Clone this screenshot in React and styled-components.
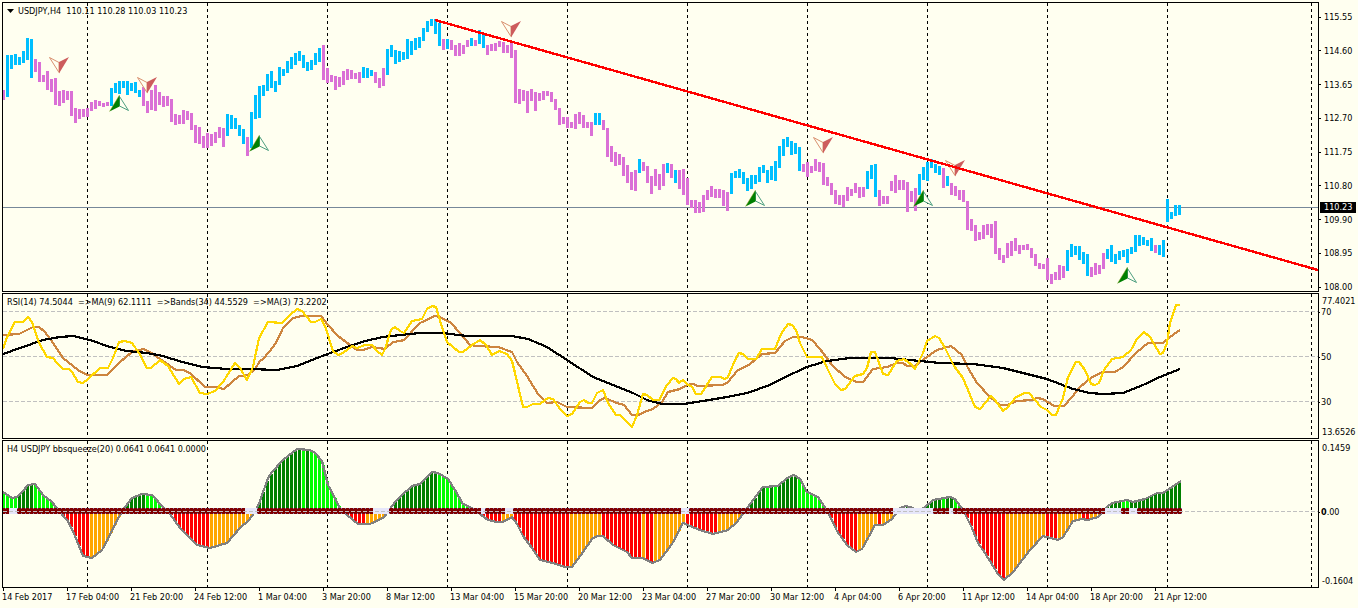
import React from "react";
import styled, { createGlobalStyle } from "styled-components";

//data
const FIRST_X = 3;
const STEP = 4;
const ZERO_Y = 511;
const SEPARATORS = [87, 207, 327, 447, 567, 687, 807, 927, 1047, 1167, 1311];

// one entry per bar: u = up, d = down, then high-low
const BARS = `
d90-100 u55-97 u55-69 u54-65 u57-65 u51-63 u38-60 u39-78 d59-72 d62-82
d75-82 d71-90 d79-92 d78-105 d91-106 d90-103 d91-100 d91-116 d108-123 d109-119
d109-117 d108-117 d102-111 d100-109 d101-106 d103-107 d102-106 u88-106 u83-93 u81-94
u81-88 u81-95 u83-91 u82-93 u90-97 d87-106 d101-113 d90-110 d85-111 d92-105
d96-107 d96-106 d99-122 d114-125 d115-124 d110-124 d111-120 d113-130 d125-143 d127-144
d136-148 d133-148 d134-146 d132-143 d127-138 d128-147 u114-136 u115-129 u118-129 u125-136
u129-144 d137-156 u112-148 u95-119 u86-118 u85-96 u74-91 u71-88 u81-92 u67-85
u69-76 u61-73 u57-69 u53-65 u51-61 u55-68 u62-71 u60-70 u53-65 u48-62
d45-80 d68-83 d75-82 d76-90 d77-87 d71-85 d69-80 d70-79 d73-79 d72-83
u67-78 u68-78 u70-76 d72-83 d78-88 d68-86 u49-75 u45-57 u50-64 u51-62
u52-60 u39-59 u41-55 u38-50 u37-48 u28-41 u21-32 u19-26 u19-34 u23-46
d39-50 u39-49 d40-50 d45-56 d43-56 d45-54 d40-47 u38-46 d40-46 u30-44
u33-48 d45-55 d44-51 d43-51 d41-47 d42-53 d45-53 d43-58 d50-103 d89-104
d90-101 d91-113 d89-101 d92-111 d93-101 d91-100 d91-96 d92-102 d99-110 d108-125
d117-124 d117-128 d122-128 d114-129 d112-124 d115-128 d122-128 d122-136 u113-125 u113-125
d120-130 d128-157 d146-162 d152-166 d154-165 d157-176 d165-183 d172-190 d170-191 u159-173
d162-171 d166-183 d176-194 d169-186 d174-190 d164-186 u163-173 d164-178 u170-183 d170-189
d169-195 d178-205 d200-208 d200-213 d202-213 d195-212 d190-200 d186-197 d189-198 d189-198
d190-206 d192-211 u173-194 u171-178 u169-178 u172-184 u178-191 u175-189 u175-184 u167-182
u165-173 u170-183 u166-180 u161-181 u146-168 u139-156 u137-147 u141-155 u143-154 u147-171
d164-172 d162-177 d166-173 d159-171 d162-172 d163-185 d177-186 d183-195 d190-204 d195-205
d195-207 d187-201 d189-196 d183-193 d187-198 d187-197 u171-189 u165-179 u164-197 d190-206
d196-204 d196-204 d181-191 d175-193 d180-190 d180-190 d182-212 d191-202 d188-211 u174-195
u167-180 u162-181 u159-168 u164-173 u166-175 d168-188 u176-186 d183-195 d186-196 d190-200
d190-202 d201-230 d219-231 d225-241 d232-240 d225-239 d224-235 d224-238 d221-254 d248-260
d255-263 d243-258 d241-256 d238-251 d245-254 d245-250 d244-250 d248-258 d254-266 d263-269
d264-269 d258-280 d274-284 d272-280 d265-280 d266-278 u250-271 u244-257 u246-255 u246-260
u252-264 u254-276 d267-277 d263-275 d265-274 d253-269 u249-259 u245-262 u254-264 u251-260
u250-257 u249-263 u247-254 u235-252 u235-246 u237-245 u240-246 u238-251 d245-253 u245-255
u240-257 u199-222 u212-219 u205-216 u205-215`
  .trim()
  .split(/\s+/)
  .map((entry) => {
    const [high, low] = entry.slice(1).split("-").map(Number);
    return { up: entry[0] === "u", high, low };
  });

const SELL_SIGNALS = [[59, 57], [147, 77], [511, 21], [823, 137], [955, 160]];
const BUY_SIGNALS = [[119, 95], [259, 135], [755, 190], [923, 190], [1127, 267]];

const RSI_FAST =
  "3,349 7,337 15,322 23,322 28,317 32,322 39,343 47,357 53,358 57,363 63,369 69,369 72,372 78,382 83,383 87,380 100,368 108,368 113,358 119,342 125,341 132,343 139,353 147,368 151,368 160,360 168,366 179,384 184,379 191,377 200,393 207,394 215,391 223,382 235,363 240,368 247,380 253,367 259,338 268,322 282,323 290,315 297,309 302,311 311,322 315,322 321,319 325,326 333,351 338,355 343,353 352,346 357,348 365,345 372,345 377,351 382,355 385,349 391,330 395,327 400,331 404,333 412,321 422,319 427,309 432,306 436,307 442,327 447,342 459,352 463,352 472,345 480,340 486,345 492,355 499,351 507,354 512,361 515,373 523,407 527,407 533,404 540,404 548,398 553,399 560,409 567,416 572,414 580,402 584,400 588,403 592,403 597,393 603,390 608,403 616,415 620,415 632,427 637,415 643,394 647,395 653,400 659,400 667,385 673,378 676,379 679,383 683,380 687,384 692,387 696,394 701,394 712,377 720,377 725,379 728,377 735,360 739,353 743,354 748,359 756,359 762,349 775,349 781,334 788,324 792,325 796,330 800,343 807,357 822,357 827,368 835,384 841,390 845,389 855,376 863,374 867,368 871,352 875,352 883,374 888,375 897,361 904,359 912,365 915,369 923,353 927,341 935,336 939,338 945,348 954,366 963,378 975,407 980,409 991,396 995,400 1003,411 1007,408 1016,397 1025,393 1029,393 1041,407 1047,410 1052,415 1056,415 1063,398 1068,377 1076,362 1079,362 1085,370 1091,384 1095,385 1099,383 1104,370 1112,359 1123,357 1131,350 1137,339 1144,332 1150,337 1160,354 1163,353 1167,343 1170,323 1176,305 1180,305";
const RSI_SLOW =
  "3,335 19,334 25,331 33,327 39,327 45,332 53,343 63,358 78,370 87,375 107,375 120,362 132,352 143,349 150,352 163,361 176,370 183,370 190,373 205,387 215,387 224,389 239,376 248,375 255,369 260,361 263,359 269,352 276,343 283,328 293,318 302,316 321,316 328,325 338,336 350,345 357,350 363,350 372,347 385,349 393,342 400,341 404,340 420,323 435,316 440,317 451,323 460,333 470,345 477,346 498,347 512,352 517,362 527,376 538,394 547,403 557,402 567,407 592,408 600,400 605,398 617,403 624,405 632,415 638,415 647,411 653,409 662,402 668,392 680,389 687,385 693,384 698,386 723,385 728,382 737,371 750,364 762,354 775,353 785,341 793,337 802,337 812,340 820,349 832,365 845,377 857,382 863,382 873,369 887,367 897,363 903,363 907,366 915,366 927,357 937,350 951,346 962,355 968,368 977,383 990,397 1000,405 1007,405 1017,401 1032,400 1037,398 1043,399 1054,406 1064,406 1072,397 1080,387 1092,377 1103,372 1115,372 1123,367 1137,352 1148,343 1163,343 1170,337 1180,330";
const RSI_BAND =
  "3,354 23,347 43,340 60,337 73,336 90,340 110,347 127,351 147,353 163,356 182,362 203,367 227,369 250,369 277,370 297,366 317,358 333,352 347,347 365,341 383,337 400,335 420,333 442,333 467,336 512,336 528,339 547,347 567,360 593,377 613,385 633,393 647,400 662,404 683,404 703,401 727,397 747,393 770,385 783,378 807,367 827,361 850,358 890,358 920,361 940,363 973,364 1003,368 1023,373 1047,379 1073,389 1090,393 1103,394 1123,393 1143,385 1160,377 1180,369";
const MOMENTUM =
  "3,492 12,498 17,497 23,491 28,485 35,484 43,495 52,502 58,510 68,521 75,536 83,556 92,558 102,550 112,531 120,515 125,507 132,498 142,494 152,495 163,507 170,514 180,528 197,545 210,548 227,543 240,528 248,521 255,512 260,501 268,478 272,472 283,460 297,449 310,450 315,453 322,461 328,485 340,508 347,515 358,524 370,524 383,518 388,512 395,502 400,497 412,486 420,484 432,472 438,473 448,479 455,490 463,504 472,508 480,514 488,520 497,522 503,522 512,517 517,524 523,536 532,548 540,560 553,563 565,567 572,567 583,552 592,539 597,536 603,536 613,545 627,552 632,558 643,558 652,563 660,560 672,544 683,523 690,526 700,530 713,534 728,530 737,522 748,507 763,487 778,486 787,478 794,475 800,479 807,492 818,497 828,512 837,531 847,545 856,552 862,549 875,525 883,525 892,519 900,508 906,506 913,508 917,510 924,508 933,500 950,497 955,499 963,510 972,528 978,543 985,553 998,574 1004,580 1013,572 1030,550 1043,536 1058,540 1063,537 1073,521 1082,519 1088,520 1098,517 1107,507 1112,503 1127,500 1133,502 1145,499 1157,493 1163,493 1181,481";

// histogram colours as runs: G green, L lime, R red, O orange
const MOMENTUM_RUNS =
  "L4 G4 L6 R8 O8 G6 L6 R10 O11 G12 L1 G1 L8 R6 O6 G12 L10 R6 O3 R14 O8 R10 O1 R2 O8 R8 O7 G5 L1 G1 L1 G5 L8 R7 O5 R1 O4 G11 L1 G2 L3 R10 O10 R3 O6 R2 O4 G4 L2 G13";
const MOMENTUM_FILL = { G: "#008000", L: "#00ff00", R: "#ff0000", O: "#ffa500" };
const NO_SQUEEZE = [
  [2, 3], [61, 63], [93, 96], [120, 120], [126, 127], [170, 171],
  [223, 232], [237, 237], [276, 279], [282, 283],
];

const PRICES = ["115.55", "114.60", "113.65", "112.70", "111.75", "110.80", "109.90", "108.95", "108.00"];
const TIMES = [
  "14 Feb 2017", "17 Feb 04:00", "21 Feb 20:00", "24 Feb 12:00", "1 Mar 04:00",
  "3 Mar 20:00", "8 Mar 12:00", "13 Mar 04:00", "15 Mar 20:00", "20 Mar 12:00",
  "23 Mar 04:00", "27 Mar 20:00", "30 Mar 12:00", "4 Apr 04:00", "6 Apr 20:00",
  "11 Apr 12:00", "14 Apr 04:00", "18 Apr 20:00", "21 Apr 12:00",
];

//helpers
const barX = (index) => FIRST_X + STEP * index;
const momentumPoints = MOMENTUM.split(" ").map((p) => p.split(",").map(Number));
const momentumAt = (x) => {
  const next = momentumPoints.findIndex(([px]) => px >= x);
  if (next <= 0) return momentumPoints[0][1];
  const [x0, y0] = momentumPoints[next - 1];
  const [x1, y1] = momentumPoints[next];
  return Math.round(y0 + ((y1 - y0) * (x - x0)) / (x1 - x0));
};
const momentumFills = MOMENTUM_RUNS.split(" ").flatMap((run) =>
  Array(Number(run.slice(1))).fill(MOMENTUM_FILL[run[0]])
);
const isSqueezed = (index) => !NO_SQUEEZE.some(([from, to]) => index >= from && index <= to);

//styles
const GlobalStyle = createGlobalStyle`
  * {
    box-sizing: border-box;
  }
  body {
    margin: 0;
    background: #fffff0;
    color: #000;
    font-family: "DejaVu Sans Condensed", "Liberation Sans", sans-serif;
    font-size: 9px;
    line-height: 12px;
  }
`;
const Terminal = styled.main`
  display: flex;
  flex-direction: column;
  gap: 1px;
  padding: 2px 0 0 2px;
  overflow: hidden;
`;
const Panel = styled.section`
  display: grid;
  grid-template-columns: minmax(0, 1fr) 39px;
  height: ${(props) => props.$height}px;
`;
const Plot = styled.div`
  position: relative;
  border: 1px solid #000;
`;
const Drawing = styled.svg`
  display: block;
  width: 100%;
  height: 100%;
  shape-rendering: crispEdges;
`;
const Title = styled.h2`
  position: absolute;
  top: 2px;
  left: 4px;
  display: flex;
  align-items: center;
  margin: 0;
  font-size: 9px;
  font-weight: 400;
  line-height: 12px;
  white-space: pre;
`;
const MenuButton = styled.button`
  display: flex;
  width: 11px;
  padding: 0;
  border: 0;
  background: none;
`;
const Scale = styled.div`
  position: relative;
  display: flex;
  flex-direction: column;
  justify-content: space-between;
  margin-bottom: -1px;
  padding-top: 9px;
`;
const LevelScale = styled.div`
  display: grid;
  grid-template-rows: ${(props) => props.$rows};
  padding-top: 2px;
`;
const Mark = styled.span`
  display: flex;
  align-items: center;
  gap: ${(props) => props.$gap}px;
  height: 12px;
  white-space: nowrap;
  &::before {
    content: "";
    width: ${(props) => (props.$gap > 2 ? 2 : 1)}px;
    height: 1px;
    background: ${(props) => (props.$plain ? "transparent" : "#000")};
  }
`;
const PriceTag = styled.output`
  position: absolute;
  top: 200px;
  left: 1px;
  width: 36px;
  padding-left: 4px;
  background: #000;
  color: #fff;
  line-height: 11px;
`;
const TimeScale = styled.div`
  display: grid;
  grid-template-columns: repeat(19, minmax(0, 64fr)) minmax(0, 101fr);
  margin: -1px 39px 0 0;
`;
const Time = styled.time`
  white-space: nowrap;
  &::before {
    content: "";
    display: block;
    width: 1px;
    height: 3px;
    margin-left: 1px;
    background: #000;
  }
`;

const Separators = ({ top, bottom }) =>
  SEPARATORS.map((x) => (
    <line key={x} x1={x + 0.5} x2={x + 0.5} y1={top} y2={bottom} stroke="#000" strokeDasharray="3 3" />
  ));

const Level = ({ y }) => (
  <line x1="3" x2="1318" y1={y + 0.5} y2={y + 0.5} stroke="#c0c0c0" strokeDasharray="4 2" />
);

const Curve = ({ points, color }) => (
  <polyline points={points} fill="none" stroke={color} strokeWidth="2.2" strokeLinejoin="round" />
);

const SellArrow = ({ x, y }) => (
  <g transform={`translate(${x} ${y})`} shapeRendering="geometricPrecision">
    <path d="M-9.500 .5 0 5.5V15.5Z" fill="#fffff0" stroke="#d9906f" strokeWidth="1" />
    <path d="M10 0 0 5V16.500Z" fill="#cd5c5c" />
  </g>
);

const BuyArrow = ({ x, y }) => (
  <g transform={`translate(${x} ${y})`} shapeRendering="geometricPrecision">
    <path d="M.5 1.500 9.500 15.500 .5 11Z" fill="#fffff0" stroke="#4d9f80" strokeWidth="1" />
    <path d="M.5 0V11.500L-9.500 16.500Z" fill="#008000" />
    <path d="M.5 0-9.500 16.500" stroke="#8c9a20" strokeWidth=".5" />
  </g>
);

// round dot, six rows high, that touches its neighbours in the middle rows
const SqueezeDot = ({ x, on }) => (
  <>
    <rect x={x - 2} y={ZERO_Y - 3} width="5" height="6" fill={on ? "#8878b0" : "#e6e6fa"} />
    <path
      d={`M${x - 1} ${ZERO_Y - 3}h3v1h1v4h-1v1h-3v-1h-1v-4h1z`}
      fill={on ? "#800000" : "#e6e6fa"}
    />
  </>
);

const PriceChart = () => (
  <Drawing viewBox="3 3 1315 288" preserveAspectRatio="none" role="img" aria-label="USDJPY price">
    <Separators top={3} bottom={291} />
    <rect x="3" y="207" width="1315" height="1" fill="#778899" />
    {BARS.map(({ up, high, low }, index) => (
      <rect
        key={index}
        x={barX(index) - 1}
        y={high}
        width="3"
        height={low - high}
        fill={up ? "#00bfff" : "#da70d6"}
      />
    ))}
    {SELL_SIGNALS.map(([x, y]) => (
      <SellArrow key={x} x={x} y={y} />
    ))}
    {BUY_SIGNALS.map(([x, y]) => (
      <BuyArrow key={x} x={x} y={y} />
    ))}
    <line x1="435" y1="20" x2="1318" y2="270" stroke="#ff0000" strokeWidth="2.4" />
  </Drawing>
);

const RsiChart = () => (
  <Drawing viewBox="3 294 1315 144" preserveAspectRatio="none" role="img" aria-label="RSI">
    <Separators top={294} bottom={438} />
    <Level y={311} />
    <Level y={356} />
    <Level y={401} />
    <Curve points={RSI_SLOW} color="#cd853f" />
    <Curve points={RSI_BAND} color="#000" />
    <Curve points={RSI_FAST} color="#ffd700" />
  </Drawing>
);

const SqueezeChart = () => (
  <Drawing viewBox="3 441 1315 146" preserveAspectRatio="none" role="img" aria-label="bbsqueeze">
    <Separators top={441} bottom={587} />
    {BARS.map((bar, index) => {
      const y = momentumAt(barX(index));
      return (
        <rect
          key={index}
          x={barX(index) - 1}
          y={Math.min(y, ZERO_Y)}
          width="3"
          height={Math.abs(y - ZERO_Y)}
          fill={momentumFills[index]}
        />
      );
    })}
    <Curve points={MOMENTUM} color="#808080" />
    {BARS.map((bar, index) => (
      <SqueezeDot key={index} x={barX(index)} on={isSqueezed(index)} />
    ))}
    <Level y={ZERO_Y} />
  </Drawing>
);

const App = () => {
  return (
    <>
      <GlobalStyle />
      <Terminal>
        <Panel $height={290}>
          <Plot>
            <PriceChart />
            <Title>
              <MenuButton aria-label="Symbol menu">
                <svg width="7" height="4" viewBox="0 0 7 4">
                  <path d="M0 0H7L3.500 4Z" />
                </svg>
              </MenuButton>
              {"USDJPY,H4  110.11 110.28 110.03 110.23"}
            </Title>
          </Plot>
          <Scale>
            {PRICES.map((price) => (
              <Mark key={price} $gap={3}>
                {price}
              </Mark>
            ))}
            <PriceTag>110.23</PriceTag>
          </Scale>
        </Panel>
        <Panel $height={146}>
          <Plot>
            <RsiChart />
            <Title>{"RSI(14) 74.5044  =>MA(9) 62.1111  =>Bands(34) 44.5529  =>MA(3) 73.2202"}</Title>
          </Plot>
          <LevelScale $rows="11px 45px 45px 30px 12px">
            <Mark $gap={2} $plain>77.4021</Mark>
            <Mark $gap={1}>70</Mark>
            <Mark $gap={1}>50</Mark>
            <Mark $gap={1}>30</Mark>
            <Mark $gap={2} $plain>13.6526</Mark>
          </LevelScale>
        </Panel>
        <Panel $height={148}>
          <Plot>
            <SqueezeChart />
            <Title>H4 USDJPY bbsqueeze(20) 0.0641 0.0641 0.0000</Title>
          </Plot>
          <LevelScale $rows="64px 69px 12px">
            <Mark $gap={2} $plain>0.1459</Mark>
            <Mark $gap={1}>
              <span>
                <b>0</b>.00
              </span>
            </Mark>
            <Mark $gap={2} $plain>-0.1604</Mark>
          </LevelScale>
        </Panel>
        <TimeScale>
          {TIMES.map((time) => (
            <Time key={time}>{time}</Time>
          ))}
        </TimeScale>
      </Terminal>
    </>
  );
};

export default App;
